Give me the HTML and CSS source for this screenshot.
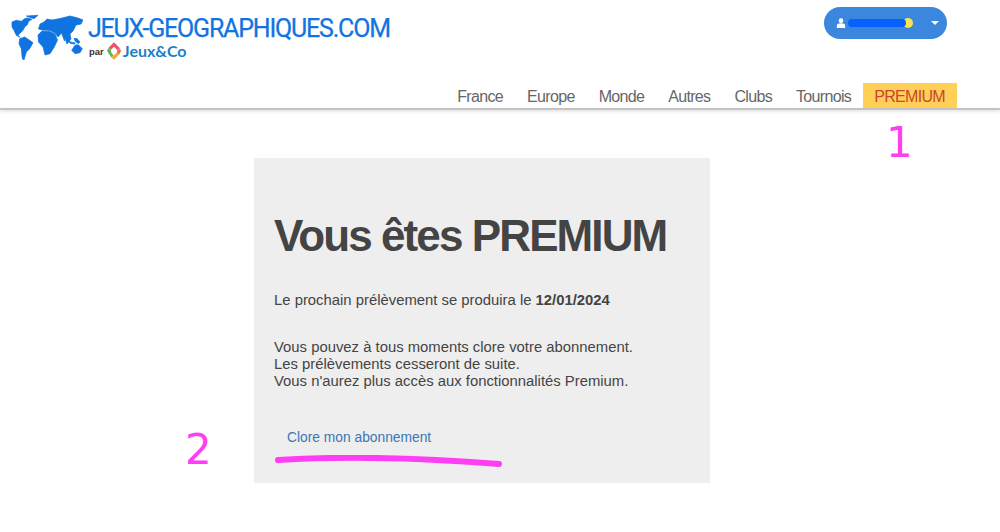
FILE: index.html
```html
<!DOCTYPE html>
<html lang="fr">
<head>
<meta charset="utf-8">
<title>Jeux-Geographiques.com - Premium</title>
<link rel="stylesheet" href="styles.css">
</head>
<body>
<header class="site-header">
  <div class="top-row">
    <a class="logo" href="#">
      <svg class="world" viewBox="0 5 83 55" aria-hidden="true">
        <path d="M12 22 16.3 20.3 21.3 21.3 24.7 18.7 27.3 18 32 19.3 28.7 21.3 27.3 24.7 24.7 27 23 30.3 20.7 32.7 18 35.3 20 37.3 16.3 35.3 14 30.3 12 27Z"/>
        <path d="M26.3 16 38 15.3 34 18.7 28.7 17Z"/>
        <path d="M19.7 38.7 24.7 37 29.7 40.3 33 42.7 29.7 48.7 26.3 52 24 60 22.3 58.7 21.3 48.7 19 43.7Z"/>
        <path d="M42 31 50 31.5 55 34 57.5 40 54.3 47 50 53.7 45 55 43 47 38.5 42 38 35Z"/>
        <path d="M38.5 29 40 24 44 22 47 19 52 20 60 18.5 70 16 78 18 83 20 81 24 76 25 73 31 70 34 71 39 67 44 65 38 64.5 41 61.5 33 58 37 55 33 50 30.5 42 30Z"/>
        <path d="M71.7 50.3 75 45.3 78.3 44.7 82.3 48.7 80 52.7 75 53.7Z"/>
        <path d="M67.5 40.5 72 42.5 75 42.8 75 44 70.5 43.5ZM74 38.5 77 38.5 80 42 78.5 43.5 75.5 41.5Z"/>
      </svg>
      <span class="logo-text">
        <span class="logo-title">JEUX-GEOGRAPHIQUES.COM</span>
        <span class="logo-sub">
          <span class="par">par</span>
          <svg class="jc-icon" viewBox="0 0 16 20" aria-hidden="true">
            <path fill="#f0506e" d="M8 0 14.5 6.5 12 9 8 5 4.5 8.5 2 6Z"/>
            <path fill="#5cb85c" d="M2 6 4.5 8.5 5 12 7.5 15 5 17.5 0 10Z"/>
            <path fill="#f7a733" d="M7.5 15 11 12 14 14 8 20 5 17.5Z"/>
            <path fill="#f26a5a" d="M12 9 14.5 6.5 16 10 14 14 11 12Z"/>
          </svg>
          <span class="jc-name">Jeux&amp;Co</span>
        </span>
      </span>
    </a>
    <button class="user-pill" type="button">
      <svg class="user-icon" viewBox="0 0 12 12" aria-hidden="true">
        <circle cx="6" cy="3.2" r="2.8"/>
        <path d="M1 12V9.2C1 7.4 2.6 6.4 6 6.4s5 1 5 2.8V12Z"/>
      </svg>
      <span class="user-mask"></span>
      <span class="user-dot"></span>
      <span class="caret"></span>
    </button>
  </div>
  <nav class="main-nav">
    <a href="#">France</a>
    <a href="#">Europe</a>
    <a href="#">Monde</a>
    <a href="#">Autres</a>
    <a href="#">Clubs</a>
    <a href="#">Tournois</a>
    <a class="premium" href="#">PREMIUM</a>
  </nav>
</header>
<main class="content">
  <section class="card">
    <h1>Vous êtes PREMIUM</h1>
    <p class="next">Le prochain prélèvement se produira le <strong>12/01/2024</strong></p>
    <p class="info">Vous pouvez à tous moments clore votre abonnement.<br>Les prélèvements cesseront de suite.<br>Vous n'aurez plus accès aux fonctionnalités Premium.</p>
    <a class="close-link" href="#">Clore mon abonnement</a>
  </section>
</main>
<span class="mark mark-1">1</span>
<span class="mark mark-2">2</span>
<svg class="scribble" viewBox="0 0 240 14" aria-hidden="true">
  <path d="M6 5C70 1 150 3 227 9"/>
</svg>
</body>
</html>
```
FILE: styles.css
```css
* { box-sizing: border-box; }
html, body { margin: 0; height: 532px; overflow: hidden; }
body {
  position: relative;
  background: #fff;
  font-family: "Liberation Sans", Arial, sans-serif;
  color: #444;
}
a { text-decoration: none; }

.site-header {
  height: 110px;
  border-bottom: 2px solid #c4c4c4;
  box-shadow: 0 2px 3px rgba(0, 0, 0, .1);
}
.top-row {
  height: 83px;
  display: flex;
  justify-content: space-between;
  align-items: flex-start;
  padding: 0 53px 0 0;
}

.logo { display: flex; align-items: flex-start; padding-top: 5px; }
.world {
  width: 83px;
  height: 55px;
  flex: none;
  fill: #0f74e0;
  stroke: #0f74e0;
  stroke-width: .7;
  stroke-linejoin: round;
}
.logo-text { display: flex; flex-direction: column; margin-left: 5px; padding-top: 12px; }
.logo-title {
  font-family: Roboto, sans-serif;
  font-size: 25px;
  line-height: 24px;
  letter-spacing: -1.2px;
  -webkit-text-stroke: .25px #1174e1;
  color: #1174e1;
  white-space: nowrap;
}
.logo-sub { display: flex; align-items: center; height: 18px; margin-top: 1px; }
.par { font: 700 9.5px/1 "Liberation Sans", sans-serif; color: #333; margin: 1px 3px 0 1px; }
.jc-icon { width: 14px; height: 18px; margin-right: 2px; }
.jc-name { font: 700 16px/1 Lato, sans-serif; color: #1d80c8; }

.user-pill {
  display: flex;
  align-items: center;
  width: 123px;
  height: 32px;
  margin-top: 7px;
  padding: 0 0 0 12px;
  border: 0;
  border-radius: 16px;
  background: #3c87de;
}
.user-icon { width: 10px; height: 12px; fill: #fff; flex: none; }
.user-mask {
  position: relative;
  z-index: 1;
  width: 58px;
  height: 8px;
  margin-left: 2px;
  border-radius: 4px;
  background: #0861ff;
}
.user-dot {
  width: 10px;
  height: 10px;
  margin-left: -3px;
  border-radius: 50%;
  background: #ffe050;
}
.caret {
  margin-left: auto;
  margin-right: 8px;
  border-left: 4px solid transparent;
  border-right: 4px solid transparent;
  border-top: 4px solid #fff;
}

.main-nav {
  display: flex;
  justify-content: flex-end;
  padding-right: 43px;
  height: 25px;
}
.main-nav a {
  padding: 0 12px;
  font-size: 16px;
  line-height: 27px;
  letter-spacing: -.67px;
  color: #666;
}
.main-nav a.premium {
  padding-left: 11px;
  background: #ffcf57;
  color: #c9472c;
}

.content { padding: 48px 0 0 254px; }
.card {
  width: 456px;
  height: 325px;
  padding: 0 20px;
  background: #eee;
}
h1 {
  margin: 0;
  padding-top: 52px;
  font-size: 44px;
  line-height: 52px;
  letter-spacing: -1.9px;
  color: #444;
  white-space: nowrap;
}
.next {
  margin: 29px 0 0;
  font-size: 14.85px;
  line-height: 18px;
}
.info {
  margin: 30px 0 0;
  font-size: 14.85px;
  line-height: 17px;
}
.close-link {
  display: block;
  margin: 39px 0 0 13px;
  font-size: 13.8px;
  line-height: 18px;
  color: #3a76b4;
}

.mark {
  position: absolute;
  font-family: "DejaVu Sans", sans-serif;
  font-size: 42px;
  line-height: 1;
  color: #ff3df2;
}
.mark-1 { left: 886px; top: 122px; }
.mark-2 { left: 185px; top: 429px; }
.scribble {
  position: absolute;
  left: 272px;
  top: 455px;
  width: 240px;
  height: 14px;
  fill: none;
  stroke: #ff3df2;
  stroke-width: 6;
  stroke-linecap: round;
}
```
